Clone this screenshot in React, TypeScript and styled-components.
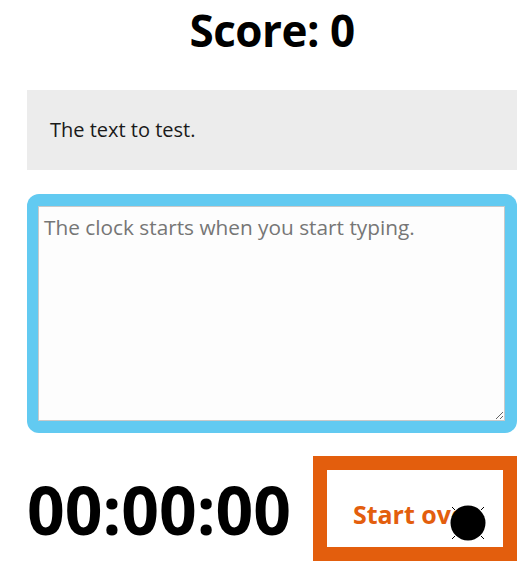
import React from "react";
import styled, { createGlobalStyle } from "styled-components";

const Global = createGlobalStyle`
  html, body { margin: 0; padding: 0; background: #ffffff; }
  body { font-family: "Open Sans", "Noto Sans", sans-serif; color: #111; }
`;

const Page = styled.div`
  width: 490px;
  padding: 0 9px 0 27px;
  display: flex;
  flex-direction: column;
`;

const Title = styled.h1`
  margin: 0;
  height: 60px;
  line-height: 60px;
  font-size: 44px;
  font-weight: 700;
  text-align: center;
  color: #000;
  letter-spacing: -0.5px;
`;

const Sample = styled.div`
  margin-top: 30px;
  height: 80px;
  line-height: 80px;
  background: #ececec;
  padding-left: 23px;
  font-size: 20px;
  color: #1a1a1a;
`;

const InputFrame = styled.div`
  margin-top: 24px;
  height: 239px;
  box-sizing: border-box;
  padding: 12px 12px 12px 11px;
  background: #62caf1;
  border-radius: 12px;
  display: flex;
`;

const TypingArea = styled.textarea`
  flex: 1;
  box-sizing: border-box;
  margin: 0;
  border: 1px solid #c9c9c9;
  background: #fdfdfd;
  padding: 6px 5px;
  font-family: "Open Sans", "Noto Sans", sans-serif;
  font-size: 20.8px;
  color: #222;
  outline: none;
  &::placeholder { color: #767676; }
`;

const BottomRow = styled.div`
  margin-top: 23px;
  display: flex;
  align-items: center;
  justify-content: space-between;
`;

const Timer = styled.div`
  font-size: 66px;
  font-weight: 700;
  color: #000;
  line-height: 1;
`;

const ResetButton = styled.button`
  position: relative;
  width: 204px;
  height: 105px;
  box-sizing: border-box;
  border: 14px solid #e35e0d;
  background: #ffffff;
  color: #e35e0d;
  font-family: "Open Sans", "Noto Sans", sans-serif;
  font-size: 25px;
  font-weight: 700;
  padding: 10px 0 0 0;
  cursor: pointer;
`;

const Cursor = styled.svg`
  position: absolute;
  left: 119px;
  top: 31px;
  width: 44px;
  height: 44px;
  pointer-events: none;
`;

export default function App() {
  return (
    <>
      <Global />
      <Page>
        <Title>Score: 0</Title>
        <Sample>The text to test.</Sample>
        <InputFrame>
          <TypingArea placeholder="The clock starts when you start typing." />
        </InputFrame>
        <BottomRow>
          <Timer>00:00:00</Timer>
          <ResetButton>
            Start over
            <Cursor viewBox="0 0 44 44">
              <circle cx="22" cy="22" r="17.5" fill="#000" />
              <path d="M6 6 L9 9 M38 6 L35 9 M6 38 L9 35 M38 38 L35 35" stroke="#000" strokeWidth="1" />
            </Cursor>
          </ResetButton>
        </BottomRow>
      </Page>
    </>
  );
}
